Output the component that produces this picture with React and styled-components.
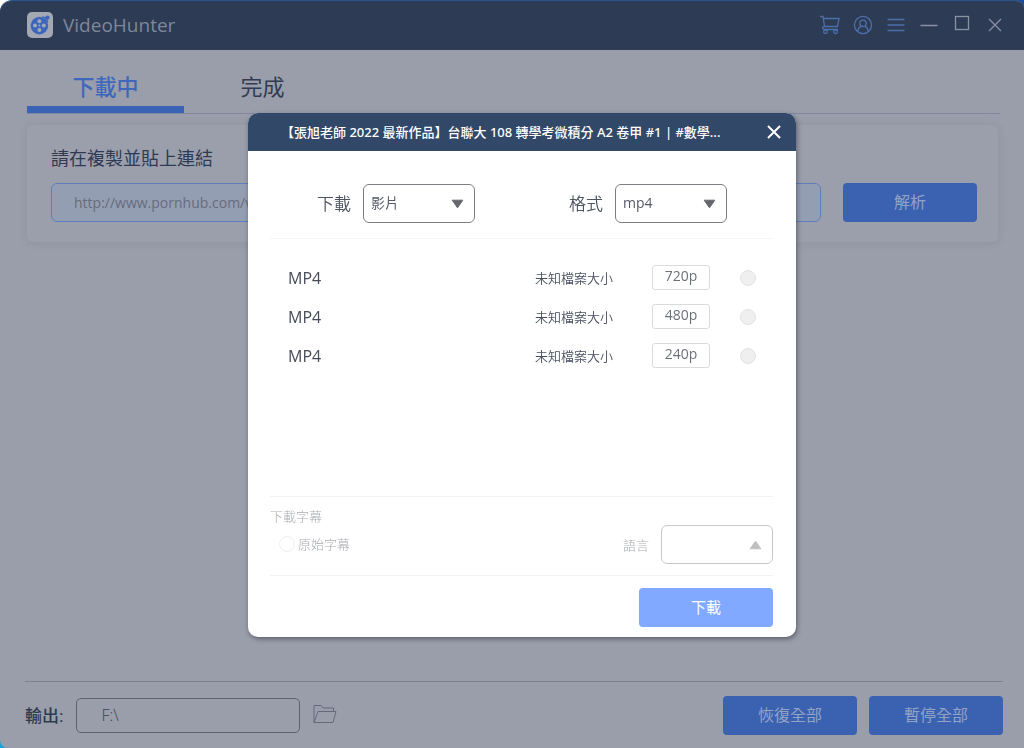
import React from "react";
import styled, { createGlobalStyle, css } from "styled-components";

const latin = `"Open Sans", "Noto Sans CJK TC", sans-serif`;

const GlobalStyle = createGlobalStyle`
  *, *::before, *::after { box-sizing: border-box; }
  body {
    margin: 0;
    background: linear-gradient(90deg, #fff 0, #fff 20px, #2f8fc0 26px, #1f5fa8 40%, #1c4a9c 100%) top / 100% 12px no-repeat, #1aa3dc;
    font-family: ${latin};
    color: #2c3a55;
  }
  button, input, select { font: inherit; margin: 0; }
  h1, h2, p, ul, fieldset { margin: 0; padding: 0; border: 0; font-weight: 400; }
`;

const Shell = styled.div`
  min-height: 100vh;
  display: flex;
  flex-direction: column;
  background: #9a9eaa;
  border-radius: 12px 8px 0 8px;
  overflow: hidden;
  border-top: 1px solid #24558c;
`;

const TitleBar = styled.header`
  height: 49px;
  padding: 0 17px 2px 27px;
  display: flex;
  align-items: center;
  justify-content: space-between;
  background: #2d3b55;
`;

const Brand = styled.div`
  display: flex;
  align-items: center;
  gap: 10px;
`;

const BrandName = styled.h1`
  font-size: 19px;
  line-height: 26px;
  color: #7f889a;
`;

const WindowControls = styled.div`
  display: flex;
  align-items: center;
  gap: 9px;
`;

const IconButton = styled.button`
  width: 24px;
  height: 24px;
  padding: 0;
  border: 0;
  background: none;
  display: grid;
  place-items: center;
  color: ${(p) => p.$color || "#4c70aa"};
`;

const Tabs = styled.nav`
  margin: 0 24px 0 27px;
  height: 64px;
  display: flex;
  align-items: stretch;
  border-bottom: 1px solid #7f88a0;
`;

const Tab = styled.button`
  width: 157px;
  padding: 16px 0 0;
  border: 0;
  background: none;
  font-size: 22px;
  line-height: 30px;
  color: ${(p) => (p.$active ? "#3f68bd" : "#313c54")};
  font-weight: ${(p) => (p.$active ? 500 : 400)};
  border-bottom: 7px solid ${(p) => (p.$active ? "#3a62b5" : "transparent")};
`;

const LinkCard = styled.form`
  margin: 11px 26px 0 27px;
  padding: 18px 21px 20px 24px;
  border-radius: 6px;
  background: #9b9fab;
  box-shadow: 0 1px 8px rgba(70, 76, 96, 0.14);
`;

const CardLabel = styled.label`
  display: block;
  margin-bottom: 10px;
  font-size: 18px;
  line-height: 30px;
  color: #2f3a52;
`;

const LinkRow = styled.div`
  display: flex;
  gap: 22px;
`;

const LinkInput = styled.input`
  flex: 1;
  min-width: 0;
  height: 39px;
  padding: 0 22px;
  border: 1px solid #5d80bd;
  border-radius: 6px;
  background: #949eb3;
  font-size: 14px;
  &::placeholder { color: #666c7c; opacity: 1; }
`;

const Button = styled.button`
  width: 134px;
  height: 39px;
  padding: 0 0 3px;
  border: 0;
  border-radius: 4px;
  font-size: ${(p) => (p.$primary ? 15 : 16)}px;
  background: ${(p) => (p.$primary ? "#80a9ff" : "#3a62b1")};
  color: ${(p) => (p.$primary ? "#fff" : "#93a3c5")};
`;

const Footer = styled.footer`
  margin: auto 21px 0 25px;
  padding: 14px 0 13px;
  border-top: 1px solid #7c8193;
  display: flex;
  align-items: center;
`;

const OutputLabel = styled.label`
  margin-right: 13px;
  font-size: 17px;
  line-height: 24px;
  font-weight: 500;
  color: #2f3a4e;
`;

const OutputInput = styled.input`
  width: 224px;
  height: 35px;
  padding: 0 24px 1px;
  border: 1px solid #5c6274;
  border-radius: 5px;
  background: transparent;
  font-size: 16px;
  font-weight: 300;
  color: #3b4355;
`;

const FolderButton = styled(IconButton)`
  margin-left: 13px;
  padding-bottom: 4px;
`;

const FooterActions = styled.div`
  margin-left: auto;
  display: flex;
  gap: 12px;
`;

const Overlay = styled.div`
  position: fixed;
  inset: 0;
  padding: 2px 0 0 20px;
  display: flex;
  align-items: center;
  justify-content: center;
`;

const Dialog = styled.section`
  width: 548px;
  max-width: 100%;
  border-radius: 10px;
  overflow: hidden;
  background: #fff;
  box-shadow: 1px 2px 5px rgba(50, 52, 66, 0.6);
`;

const DialogHeader = styled.header`
  height: 38px;
  padding: 0 10px 0 33px;
  display: flex;
  align-items: center;
  justify-content: space-between;
  background: #324869;
`;

const DialogTitle = styled.h2`
  flex: 1;
  font-family: "Noto Sans", "Noto Sans CJK TC", sans-serif;
  font-size: 13px;
  line-height: 20px;
  font-weight: 500;
  color: #fff;
  white-space: nowrap;
`;

const DialogBody = styled.div`
  padding: 0 23px 10px 22px;
`;

const Options = styled.div`
  height: 88px;
  padding: 18px 46px 0 47px;
  display: flex;
  align-items: center;
  justify-content: space-between;
  border-bottom: 1px solid #f5f5f6;
`;

const Field = styled.div`
  display: flex;
  align-items: center;
  gap: 12px;
`;

const FieldLabel = styled.label`
  font-size: ${(p) => (p.$muted ? 13 : 17)}px;
  line-height: 24px;
  font-weight: ${(p) => (p.$muted ? 300 : 350)};
  color: ${(p) => (p.$muted ? "#a9abb1" : "#4d525e")};
`;

const SelectBox = styled.div`
  display: grid;
  align-items: center;
  width: 112px;
  & > * { grid-area: 1 / 1; }
  & > svg { justify-self: end; margin-right: 11px; pointer-events: none; }
`;

const Select = styled.select`
  appearance: none;
  width: 100%;
  height: 39px;
  padding: 0 30px 2px 7px;
  border: 1px solid #7b7d82;
  border-radius: 6px;
  background: #fff;
  font-size: 14px;
  color: #555a66;
  ${(p) => p.disabled && css`border-color: #c9c9cb; opacity: 1;`}
`;

const Formats = styled.ul`
  list-style: none;
  min-height: 257px;
  padding: 19px 17px 0 18px;
`;

const FormatRow = styled.li`
  height: 39px;
  display: grid;
  grid-template-columns: 1fr 117px 88px 16px;
  align-items: center;
`;

const FormatName = styled.span`
  font-size: 16px;
  line-height: 22px;
  color: #454b58;
`;

const FormatSize = styled.span`
  font-size: 13px;
  line-height: 20px;
  font-weight: 350;
  color: #4a5060;
`;

const Quality = styled.label`
  width: 58px;
  height: 25px;
  border: 1px solid #dadbdd;
  border-radius: 3px;
  font-size: 14px;
  line-height: 20px;
  text-align: center;
  color: #6c7079;
`;

const Radio = styled.input`
  appearance: none;
  width: 16px;
  height: 16px;
  border: 1px solid #e2e2e3;
  border-radius: 50%;
  background: #efeff0;
  ${(p) => p.$faint && css`background: #fff; border-color: #efeff0;`}
`;

const Subtitles = styled.fieldset`
  padding: 10px 0;
  border-top: 1px solid #f3f3f4;
  border-bottom: 1px solid #f3f3f4;
`;

const SubtitleCaption = styled.p`
  font-size: 13px;
  line-height: 19px;
  font-weight: 300;
  color: #a9abb1;
`;

const SubtitleColumns = styled.div`
  display: flex;
  justify-content: space-between;
  align-items: flex-start;
`;

const SubtitleChoice = styled(Field)`
  gap: 3px;
  padding: 6px 0 9px 9px;
`;

const SubtitleField = styled(Field)`
  padding-top: 18px;
`;

const DialogActions = styled.div`
  padding-top: 12px;
  display: flex;
  justify-content: flex-end;
`;

const Logo = () => (
  <svg width="26" height="26" viewBox="0 0 26 26" aria-hidden="true">
    <rect width="26" height="26" rx="5" fill="#a4a8b3" />
    <circle cx="12.400" cy="13.600" r="8.800" fill="#3c66bb" />
    <circle cx="20.400" cy="5.600" r="2.200" fill="#3c66bb" />
    <path d="M15.500 4.500l3.500 2.200 1.800 3.400" fill="none" stroke="#3c66bb" strokeWidth="1.400" />
    <g fill="#a4a8b3">
      <circle cx="12.400" cy="9.200" r="2" />
      <circle cx="12.400" cy="18" r="2" />
      <circle cx="8" cy="13.600" r="2" />
      <circle cx="16.800" cy="13.600" r="2" />
      <circle cx="12.400" cy="13.600" r="1" />
    </g>
  </svg>
);

const line = { fill: "none", stroke: "currentColor", strokeWidth: 1.3, "aria-hidden": true };

const CartIcon = () => (
  <svg width="22" height="22" viewBox="0 0 22 22" {...line}>
    <path d="M1 2.500h3l1.500 10M4.500 4.500h15.500l-1.500 8h-13M5 15.500h14" />
    <path d="M5.500 12.500a1.500 1.500 0 0 0 -0.500 3" />
    <circle cx="6.500" cy="17.800" r="1.800" />
    <circle cx="16.500" cy="17.800" r="1.800" />
  </svg>
);

const UserIcon = () => (
  <svg width="20" height="20" viewBox="0 0 20 20" {...line}>
    <circle cx="10" cy="10" r="8.600" />
    <circle cx="10" cy="8.300" r="3.200" />
    <path d="M5 16c0-2.600 1.400-4 3.200-4.500M15 16c0-2.600-1.400-4-3.200-4.500" />
  </svg>
);

const MenuIcon = () => (
  <svg width="18" height="16" viewBox="0 0 18 16" {...line}>
    <path d="M0.500 2.500h17M0.500 8h17M0.500 13.500h17" />
  </svg>
);

const MinimizeIcon = () => (
  <svg width="18" height="16" viewBox="0 0 18 16" {...line}>
    <path d="M0.500 8.500h17" />
  </svg>
);

const MaximizeIcon = () => (
  <svg width="16" height="20" viewBox="0 0 16 20" {...line}>
    <rect x="1.500" y="1.500" width="13" height="13" />
  </svg>
);

const CloseIcon = ({ weight = 1.3 }) => (
  <svg width="14" height="14" viewBox="0 0 14 14" {...line} strokeWidth={weight}>
    <path d="M1 1l12 12M13 1L1 13" />
  </svg>
);

const FolderIcon = () => (
  <svg width="24" height="20" viewBox="0 0 24 20" {...line} strokeWidth="1" strokeLinejoin="round">
    <path d="M1 18.500v-17h7l2 2.500h10.500v3.500M1 18.500l4-11h18l-3 11z" />
  </svg>
);

const Triangle = ({ up }) => (
  <svg width="13" height="10" viewBox="0 0 13 10" aria-hidden="true">
    {up ? (
      <path d="M6.500 1.200L11.800 8.800H1.200z" fill="#bfbfc1" stroke="#bfbfc1" strokeLinejoin="round" />
    ) : (
      <path d="M1.200 1.200h10.600L6.500 8.800z" fill="#65676c" stroke="#65676c" strokeLinejoin="round" />
    )}
  </svg>
);

const formats = ["720p", "480p", "240p"];

export default function App() {
  return (
    <>
      <GlobalStyle />
      <Shell>
        <TitleBar>
          <Brand>
            <Logo />
            <BrandName>VideoHunter</BrandName>
          </Brand>
          <WindowControls>
            <IconButton type="button" aria-label="Cart"><CartIcon /></IconButton>
            <IconButton type="button" aria-label="Account"><UserIcon /></IconButton>
            <IconButton type="button" aria-label="Menu"><MenuIcon /></IconButton>
            <IconButton type="button" aria-label="Minimize" $color="#8991a3"><MinimizeIcon /></IconButton>
            <IconButton type="button" aria-label="Maximize" $color="#8991a3"><MaximizeIcon /></IconButton>
            <IconButton type="button" aria-label="Close window" $color="#8991a3"><CloseIcon /></IconButton>
          </WindowControls>
        </TitleBar>

        <Tabs>
          <Tab type="button" $active>下載中</Tab>
          <Tab type="button">完成</Tab>
        </Tabs>

        <LinkCard onSubmit={(e) => e.preventDefault()}>
          <CardLabel htmlFor="link">請在複製並貼上連結</CardLabel>
          <LinkRow>
            <LinkInput id="link" type="url" placeholder="http://www.pornhub.com/v" />
            <Button type="submit">解析</Button>
          </LinkRow>
        </LinkCard>

        <Footer>
          <OutputLabel htmlFor="output">輸出:</OutputLabel>
          <OutputInput id="output" defaultValue={"F:\\"} />
          <FolderButton type="button" aria-label="Browse" $color="#646a7b"><FolderIcon /></FolderButton>
          <FooterActions>
            <Button type="button">恢復全部</Button>
            <Button type="button">暫停全部</Button>
          </FooterActions>
        </Footer>
      </Shell>

      <Overlay>
        <Dialog role="dialog" aria-labelledby="dialog-title">
          <DialogHeader>
            <DialogTitle id="dialog-title">【張旭老師 2022 最新作品】台聯大 108 轉學考微積分 A2 卷甲 #1 | #數學...</DialogTitle>
            <IconButton type="button" aria-label="Close" $color="#fff"><CloseIcon weight={2} /></IconButton>
          </DialogHeader>
          <DialogBody>
            <Options>
              <Field>
                <FieldLabel htmlFor="kind">下載</FieldLabel>
                <SelectBox>
                  <Select id="kind"><option>影片</option></Select>
                  <Triangle />
                </SelectBox>
              </Field>
              <Field>
                <FieldLabel htmlFor="format">格式</FieldLabel>
                <SelectBox>
                  <Select id="format"><option>mp4</option></Select>
                  <Triangle />
                </SelectBox>
              </Field>
            </Options>

            <Formats>
              {formats.map((quality) => (
                <FormatRow key={quality}>
                  <FormatName>MP4</FormatName>
                  <FormatSize>未知檔案大小</FormatSize>
                  <Quality htmlFor={quality}>{quality}</Quality>
                  <Radio id={quality} type="radio" name="quality" />
                </FormatRow>
              ))}
            </Formats>

            <Subtitles disabled>
              <SubtitleColumns>
                <div>
                  <SubtitleCaption>下載字幕</SubtitleCaption>
                  <SubtitleChoice>
                    <Radio id="original" type="radio" $faint />
                    <FieldLabel htmlFor="original" $muted>原始字幕</FieldLabel>
                  </SubtitleChoice>
                </div>
                <SubtitleField>
                  <FieldLabel htmlFor="language" $muted>語言</FieldLabel>
                  <SelectBox>
                    <Select id="language" disabled />
                    <Triangle up />
                  </SelectBox>
                </SubtitleField>
              </SubtitleColumns>
            </Subtitles>

            <DialogActions>
              <Button type="button" $primary>下載</Button>
            </DialogActions>
          </DialogBody>
        </Dialog>
      </Overlay>
    </>
  );
}
